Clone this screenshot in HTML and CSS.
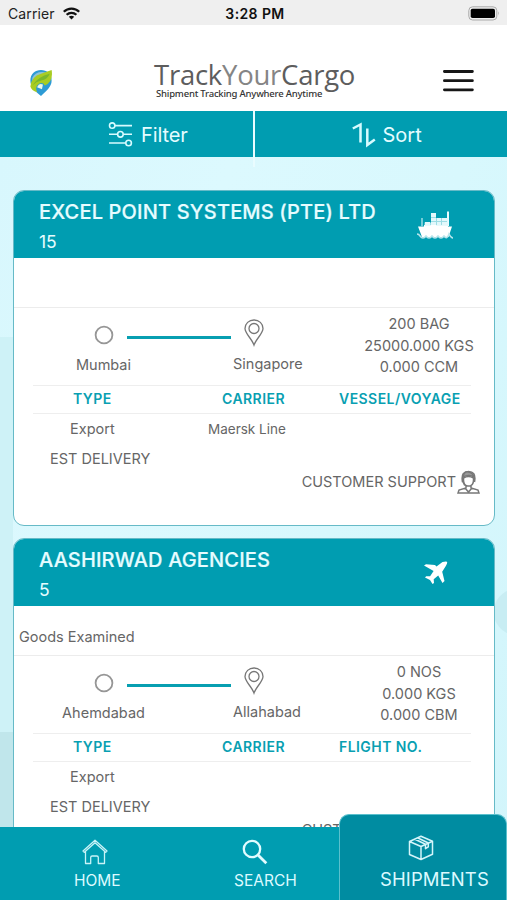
FILE: index.html
```html
<!DOCTYPE html>
<html lang="en">
<head>
<meta charset="utf-8">
<title>TrackYourCargo</title>
<link rel="stylesheet" href="styles.css">
</head>
<body>
<div class="app">
  <div class="status-bar">
    <div class="carrier"><span>Carrier</span>
      <svg width="17" height="13" viewBox="0 0 17 13" fill="none" stroke="#111" stroke-width="2.2"><path d="M.8 4.8C5 .5 12 .5 16.2 4.8M3.6 7.8c2.8-2.7 7-2.7 9.8 0"/><path d="M8.5 12.4 5.8 9.8q2.7-2 5.4 0Z" fill="#111" stroke="none"/></svg>
    </div>
    <span class="clock">3:28 PM</span>
    <svg class="battery" width="32" height="15" viewBox="0 0 32 15"><rect x=".8" y=".8" width="28" height="13.2" rx="3.8" fill="#eee" stroke="#aaa"/><rect x="2.7" y="2.7" width="24.3" height="9.4" rx="1.8" fill="#000"/><path d="M30.3 5.2q1.5 2.1 0 4.4Z" fill="#999"/></svg>
  </div>
  <header class="brand-bar">
    <svg class="pin-logo" width="24" height="29" viewBox="0 0 24 30"><path d="M1 12C1 5 6 1 12 1s11 4 11 11-6 11-11 16C6 23 1 19 1 12Z" fill="#2d9bd5"/><path d="M3 9Q6 3 13 3l6 1-9 5-7 6Z" fill="#8fc2d5"/><path d="M1 18Q2 8 12 5l11-4q2 12-7 16-3-5-8 0-2 3 0 7-6-2-7-6Z" fill="#a8cc22"/><path d="M3 17Q9 8 21 5q-2 6-9 7-5 1-9 5Z" fill="#78b82c"/><path d="M8 19q2-5 6-3l-1 5Z" fill="#eef8e9"/></svg>
    <div class="wordmark"><div class="name">Track<span>Your</span>Cargo</div><div class="tagline">Shipment Tracking Anywhere Anytime</div></div>
    <svg class="menu" width="31" height="24" viewBox="0 0 31 24" stroke="#171717" stroke-width="2.8" stroke-linecap="round"><path d="M1.4 2.5h28M1.4 11.7h28M1.4 20.8h28"/></svg>
  </header>
  <div class="toolbar">
    <div class="tool filter"><svg width="25" height="25" viewBox="0 0 25 25" fill="none" stroke="#d7fbff" stroke-width="1.6"><circle cx="4.2" cy="3.6" r="2.7"/><path d="M7 3.6h17M1 12.3h8.5M15.3 12.3H24M1 21h16.7"/><circle cx="12.4" cy="12.3" r="2.8"/><circle cx="20.6" cy="21" r="2.8"/></svg><span>Filter</span></div>
    <div class="divider"></div>
    <div class="tool sort"><svg width="24" height="26" viewBox="0 0 24 26" fill="none" stroke="#d7fbff" stroke-width="2.5"><path d="M.8 6.500 8.500 2.500v18M15.300 6.500v16.500l7.500-5.500"/></svg><span>Sort</span></div>
  </div>
  <main class="list">
    <article class="card">
      <div class="card-head"><div><h2 class="t-excel">EXCEL POINT SYSTEMS (PTE) LTD</h2><p>15</p></div>
        <svg class="ship" width="38" height="30" viewBox="0 0 38 30"><path d="M2 15.5h6V14h24v1.5h4L32.5 26H6Z" fill="#fff"/><path d="M15 2h5v4h-5zM15 7h5v3h-5zM15 11h5v3h-5zM21 7h4v3h-4zM21 11h4v3h-4zM26 7h5v3h-5zM26 11h5v3h-5zM9 11h5v3H9zM31 .5h2V15h-2zM5.5 7h1v8h-1z" fill="#e9fcff"/><path d="M15 2h5v12h-5zM20 7h12v8H20zM8.500 11.500H15V15H8.500z" fill="#dff6f9" opacity=".7"/><path d="M1 23q2 0 3 2 3 4 6 0 3 4 6 0 3 4 6 0 3 4 6 0 3 4 5-2 2 4 4 4" fill="none" stroke="#b9e5eb" stroke-width="1.6"/></svg></div>
      <div class="milestone"></div>
      <div class="route">
        <div class="from"><svg width="20" height="20" viewBox="0 0 20 20"><circle cx="10" cy="10" r="8.4" fill="none" stroke="#969696" stroke-width="1.8"/></svg><span>Mumbai</span></div>
        <div class="leg"></div>
        <div class="to"><svg width="20" height="28" viewBox="0 0 20 28" fill="none" stroke="#777" stroke-width="1.3"><path d="M10 26C8 20 1 14.5 1 9.5 1 4.5 5 1 10 1s9 3.500 9 8.500C19 14.500 12 20 10 26Z"/><circle cx="10" cy="9.500" r="5"/></svg><span>Singapore</span></div>
        <div class="load"><span>200 BAG</span><span>25000.000 KGS</span><span>0.000 CCM</span></div>
      </div>
      <div class="columns"><span>TYPE</span><span>CARRIER</span><span>VESSEL/VOYAGE</span></div>
      <div class="values"><span>Export</span><span class="carrier-name">Maersk Line</span></div>
      <div class="delivery">EST DELIVERY</div>
      <div class="support"><span>CUSTOMER SUPPORT</span><svg width="23" height="24" viewBox="0 0 23 24" fill="none" stroke="#777" stroke-width="1.500"><path d="M5.500 12C4 4 7 1.500 11.500 1.500S19 4 17.500 12M6.500 8q5-3 10 0v2c0 4-2 6-5 6s-5-2-5-6ZM5.500 11l2 4 3 1M9 15v3l-7 2-1 3h21l-1-3-7-2v-3M8 18l3.500 4 3.500-4"/><path d="M6 7Q7 1 11.500 2t5.500 5q-5-3-11 0Z" fill="#999"/></svg></div>
    </article>
    <article class="card">
      <div class="card-head"><div><h2>AASHIRWAD AGENCIES</h2><p>5</p></div>
        <svg class="plane" width="25" height="24" viewBox="0 0 25 24"><path d="m1 4.500 2-1.200 9 .8L13.500 5.500 19.500 1Q23 0 24 .8q.8 1-1.500 4.700l-3.300 5.300L21.500 20l-2 2-4.300-7.500-4.500 3.800.3 3.700L9.500 23l-2.500-4L2 16.500l1.200-1.300 3.900.1 3.500-5.300Z" fill="#fff"/></svg></div>
      <div class="milestone">Goods Examined</div>
      <div class="route">
        <div class="from"><svg width="20" height="20" viewBox="0 0 20 20"><circle cx="10" cy="10" r="8.400" fill="none" stroke="#969696" stroke-width="1.800"/></svg><span>Ahemdabad</span></div>
        <div class="leg"></div>
        <div class="to"><svg width="20" height="28" viewBox="0 0 20 28" fill="none" stroke="#777" stroke-width="1.300"><path d="M10 26C8 20 1 14.500 1 9.500 1 4.500 5 1 10 1s9 3.500 9 8.500C19 14.500 12 20 10 26Z"/><circle cx="10" cy="9.500" r="5"/></svg><span>Allahabad</span></div>
        <div class="load"><span>0 NOS</span><span>0.000 KGS</span><span>0.000 CBM</span></div>
      </div>
      <div class="columns"><span>TYPE</span><span>CARRIER</span><span>FLIGHT NO.</span></div>
      <div class="values"><span>Export</span></div>
      <div class="delivery">EST DELIVERY</div>
      <div class="support"><span>CUSTOMER SUPPORT</span></div>
    </article>
  </main>
  <nav class="tabs">
    <div class="tab home"><svg width="26" height="26" viewBox="0 0 26 26" fill="none" stroke="#c9f3f7" stroke-width="1.300" stroke-linejoin="round"><path d="M1 12 13 1.200 25 12l-1.300 1.300L13 3.700 2.300 13.300ZM3.500 12.500v12h5.200v-6q0-1.500 1.500-1.500h4.600q1.500 0 1.500 1.500v6h6.200v-12"/></svg><span>HOME</span></div>
    <div class="tab search"><svg width="26" height="26" viewBox="0 0 26 26" fill="none" stroke="#e2fcff"><circle cx="10" cy="10" r="8.200" stroke-width="2.300"/><path d="m16 16 8.300 8.300" stroke-width="2.800"/></svg><span>SEARCH</span></div>
    <div class="tab shipments"><svg width="26" height="26" viewBox="0 0 26 26" fill="none" stroke="#d4f5fa" stroke-width="1.500" stroke-linejoin="round"><path d="m13 1.200 11.500 5v13L13 24.500l-11.500-5v-13ZM1.500 6.500 13 11.500l11.500-5.300M13 11.500v13M7 4.200l10.500 5v4.500l2.800-1.800V8L10 3"/></svg><span>SHIPMENTS</span></div>
  </nav>
</div>
</body>
</html>
```
FILE: styles.css
```css
* { box-sizing: border-box; }
body { margin: 0; font-family: Inter, "Liberation Sans", sans-serif; color: #666; }
h2, p { margin: 0; }
svg { display: block; flex: none; }
span { white-space: nowrap; }
.app { width: 507px; height: 900px; overflow: hidden; display: flex; flex-direction: column; position: relative; background: #fff; }

.status-bar { flex: none; height: 25px; background: #efefef; display: grid; grid-template-columns: 1fr auto 1fr; align-items: center; padding: 2px 7px 0 8px; color: #222; font-size: 14px; line-height: 20px; }
.carrier { display: flex; align-items: center; gap: 8px; letter-spacing: .1px; }
.clock { font-weight: 600; letter-spacing: .4px; color: #111; margin-left: 2px; }
.battery { justify-self: end; }

.brand-bar { flex: none; height: 86px; display: flex; align-items: flex-start; padding-left: 29px; }
.pin-logo { margin-top: 44px; }
.wordmark { margin: 37px 0 0 101px; width: 203px; color: #5d5d5d; font-family: "Open Sans", "Noto Sans", sans-serif; }
.name { font-size: 27.500px; line-height: 26px; white-space: nowrap; letter-spacing: -.25px; }
.name span { color: #858585; }
.tagline { margin-left: 2px; font: 500 9.500px/12px "Noto Sans", sans-serif; letter-spacing: -.2px; color: #333; white-space: nowrap; }
.menu { margin: 44px 0 0 86px; }

.toolbar { flex: none; height: 46px; background: #009db1; display: flex; color: #e4fcff; font-size: 20px; line-height: 24px; z-index: 1; }
.tool { display: flex; align-items: center; width: 253px; padding-top: 1px; }
.filter { padding-left: 108px; gap: 8px; letter-spacing: -.1px; }
.divider { width: 2px; height: 56px; background: #e9fcff; }
.sort { padding-left: 97px; gap: 7px; }

.list { flex: 1; min-height: 0; padding: 33px 12px 0 13px; background: linear-gradient(#c0e6eb, #c0e6eb) 0 575px / 13px 95px no-repeat, radial-gradient(ellipse at 522px 455px, #c8edf3 0 28px, transparent 29px), linear-gradient(90deg, #ceF2f7 0 13px, transparent 13px) 0 180px / 100% 395px no-repeat, linear-gradient(110deg, #d8f7fd 0, #dcf9fe 30%, #d8f8fd 60%, #d2f5fb 100%); }
.card { height: 336px; border: 1.500px solid #66bac7; border-radius: 11px; background: #fff; overflow: hidden; margin-bottom: 12px; font-size: 14.500px; line-height: 18px; letter-spacing: 0; }
.card-head { margin: -1px -1px 0; height: 68px; background: #009db1; color: #e6fcff; display: flex; justify-content: space-between; padding: 10px 0 0 26px; }
.card-head h2 { font-size: 20px; line-height: 25px; font-weight: 500; letter-spacing: .16px; white-space: nowrap; -webkit-text-stroke: .2px currentColor; }
.card-head p { font-size: 17.500px; line-height: 24px; margin-top: 5px; }
.ship { margin: 11px 41px 0 0; }
.plane { margin: 13px 47px 0 0; }
.milestone { height: 50px; border-bottom: 1px solid #ececec; padding: 22px 0 0 5px; }
.route { height: 77px; display: grid; grid-template-columns: 113px 104px 72px 1fr; }
.from { display: flex; flex-direction: column; align-items: center; padding: 17px 0 0 66px; }
.from svg { margin-bottom: 11px; }
.leg { height: 2.500px; margin-top: 28px; background: #079fb1; }
.to { display: flex; flex-direction: column; align-items: flex-start; padding: 11px 0 0 13px; }
.to span { margin: 8px 0 0 -11px; }
.load { display: flex; flex-direction: column; align-items: center; padding: 7px 0 0 41px; gap: 3.500px; }
.columns { margin: 0 23px 0 19px; height: 29px; border: solid #eee; border-width: 1px 0; display: grid; grid-template-columns: 149px 117px 1fr; padding: 4px 0 0 40px; font-size: 14px; font-weight: 600; color: #099fb2; letter-spacing: .44px; }
.values { display: grid; grid-template-columns: 138px 1fr; padding: 6px 0 0 56px; }
.delivery { padding: 12px 0 0 36px; }
.support { display: flex; justify-content: flex-end; align-items: center; gap: 1px; padding: 1px 14px 0 0; height: 26px; }
.support span:last-child { margin-right: 24px; }
.carrier-name { font-size: 13.500px; }

.tabs { position: absolute; left: 0; right: 0; bottom: 0; height: 86px; display: grid; grid-template-columns: 175px 164px 168px; align-items: end; color: #dcfaff; font-size: 15.500px; line-height: 20px; }
.tab { height: 73px; background: #009db1; display: flex; flex-direction: column; }
.home { padding: 12px 0 0 82px; }
.home span { margin: 6px 0 0 -8px; }
.search { padding: 12px 0 0 67px; }
.search span { margin: 6px 0 0 -8px; }
.shipments { height: 86px; background: #008ca1; border: 1px solid #5bc0cd; border-width: 1px 1px 0; border-radius: 10px 10px 0 0; padding: 20px 0 0 68px; font-size: 18.500px; line-height: 24px; letter-spacing: .1px; }
.shipments span { margin: 6px 0 0 -28px; }
```
